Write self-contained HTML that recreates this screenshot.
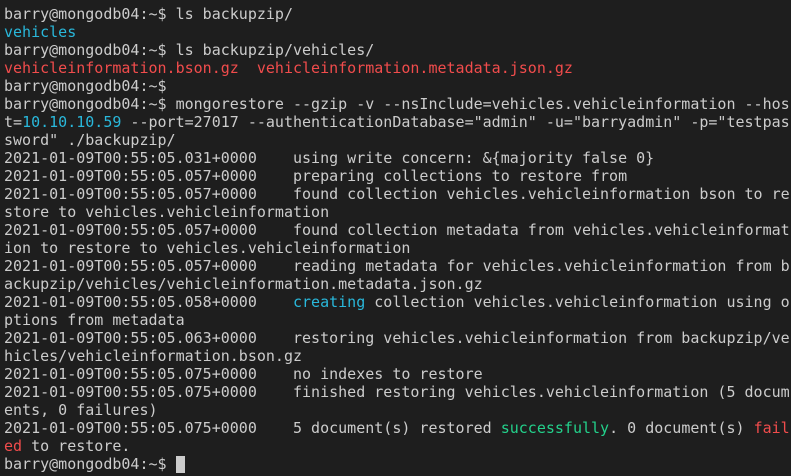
<!DOCTYPE html>
<html><head><meta charset="utf-8"><style>
html,body{margin:0;padding:0;background:#1e1e1e;width:791px;height:476px;overflow:hidden}
pre{margin:0;padding:5px 0 0 4px;font-family:"DejaVu Sans Mono","Liberation Mono",monospace;font-size:15px;line-height:18px;color:#cccccc;white-space:pre}
.c{color:#29b8db}.r{color:#f14c4c}.g{color:#23d18b}
.cur{display:inline-block;width:9px;height:17px;background:#cccccc;vertical-align:-4px}
</style></head><body><pre>barry@mongodb04:~$ ls backupzip/
<span class="c">vehicles</span>
barry@mongodb04:~$ ls backupzip/vehicles/
<span class="r">vehicleinformation.bson.gz</span>  <span class="r">vehicleinformation.metadata.json.gz</span>
barry@mongodb04:~$
barry@mongodb04:~$ mongorestore --gzip -v --nsInclude=vehicles.vehicleinformation --hos
t=<span class="c">10.10.10.59</span> --port=27017 --authenticationDatabase="admin" -u="barryadmin" -p="testpas
sword" ./backupzip/
2021-01-09T00:55:05.031+0000    using write concern: &amp;{majority false 0}
2021-01-09T00:55:05.057+0000    preparing collections to restore from
2021-01-09T00:55:05.057+0000    found collection vehicles.vehicleinformation bson to re
store to vehicles.vehicleinformation
2021-01-09T00:55:05.057+0000    found collection metadata from vehicles.vehicleinformat
ion to restore to vehicles.vehicleinformation
2021-01-09T00:55:05.057+0000    reading metadata for vehicles.vehicleinformation from b
ackupzip/vehicles/vehicleinformation.metadata.json.gz
2021-01-09T00:55:05.058+0000    <span class="c">creating</span> collection vehicles.vehicleinformation using o
ptions from metadata
2021-01-09T00:55:05.063+0000    restoring vehicles.vehicleinformation from backupzip/ve
hicles/vehicleinformation.bson.gz
2021-01-09T00:55:05.075+0000    no indexes to restore
2021-01-09T00:55:05.075+0000    finished restoring vehicles.vehicleinformation (5 docum
ents, 0 failures)
2021-01-09T00:55:05.075+0000    5 document(s) restored <span class="g">successfully</span>. 0 document(s) <span class="r">fail</span>
<span class="r">ed</span> to restore.
barry@mongodb04:~$ <span class="cur"></span></pre></body></html>
